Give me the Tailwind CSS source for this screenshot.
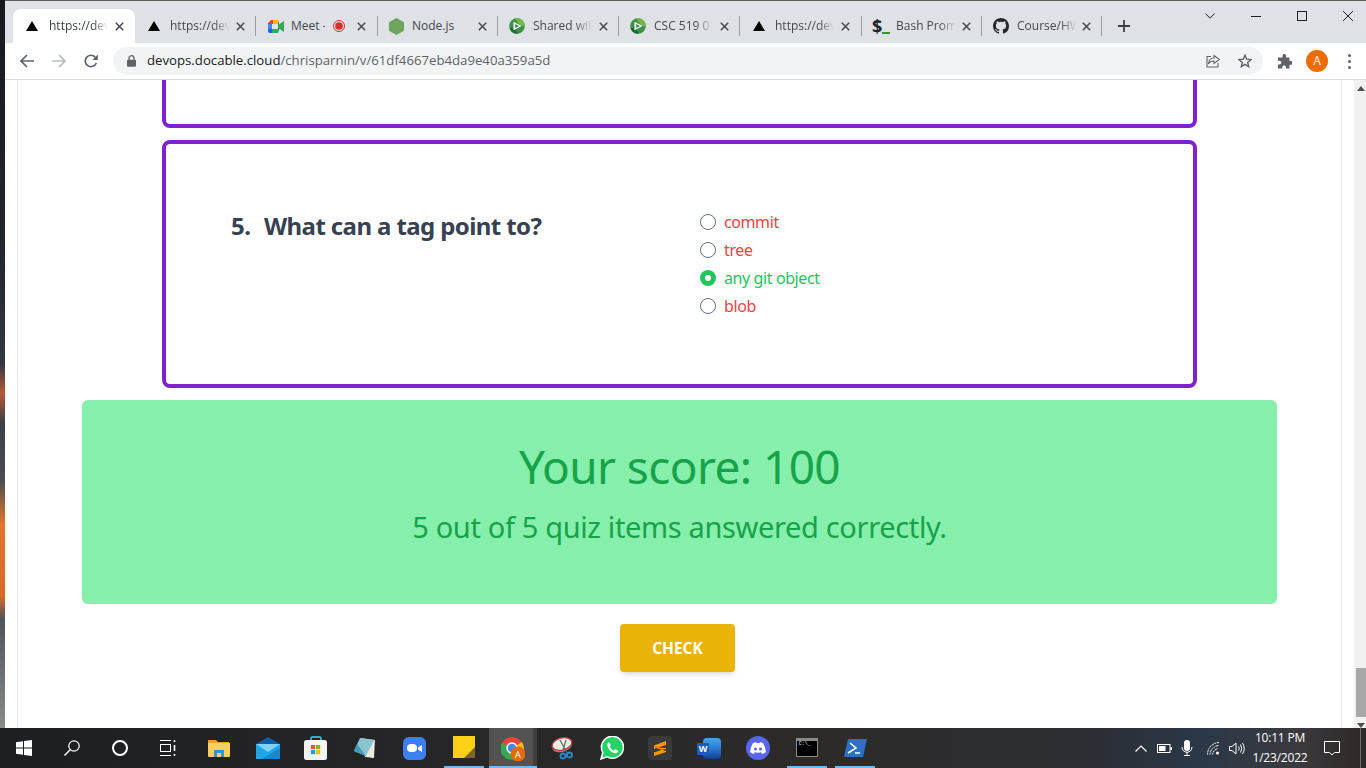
<!DOCTYPE html>
<html lang="en">
<head>
  <meta charset="UTF-8" />
  <title>Docable quiz</title>
  <script src="https://cdn.jsdelivr.net/npm/@tailwindcss/browser@4"></script>
</head>
<body class="w-[1366px] h-[768px] overflow-hidden flex flex-col bg-white font-['Noto_Sans',sans-serif]">

  <div class="flex h-[728px]">
    <!-- wallpaper strip -->
    <div class="w-[5px] bg-[linear-gradient(to_bottom,#16181d_0%,#23272d_35%,#34383e_50%,#b5583a_54%,#3c3f44_58%,#4a4c50_66%,#e2762d_72%,#d56a2a_82%,#50545a_85%,#8a8c8a_100%)]"></div>

    <!-- browser window -->
    <div class="w-[1361px] flex flex-col">
      <!-- tab strip -->
      <div class="h-[43px] bg-[#dee1e6] border-t border-[#5f6060] flex items-start pl-[8px] font-['Open_Sans',sans-serif] text-[12px] text-[#45484d]">
        <div class="w-[122px] h-[34px] mt-[8px] rounded-t-lg bg-white flex items-center pl-[13px] text-[#3c4043]">
          <svg class="w-[12px] h-[10px]" viewBox="0 0 12 10"><path d="M6 0L12 10H0Z" fill="#000"/></svg>
          <span class="ml-[11px] w-[59px] overflow-hidden whitespace-nowrap [mask-image:linear-gradient(to_right,black_75%,transparent)]">https://dev</span>
          <svg class="ml-[7px] w-[9px] h-[9px]" viewBox="0 0 9 9"><path d="M.8.8l7.4 7.4M8.200.8L.8 8.200" stroke="#45484d" stroke-width="1.500"/></svg>
        </div>
        <div class="w-[121px] h-[34px] mt-[8px] flex items-center pl-[13px] relative">
          <svg class="w-[12px] h-[10px]" viewBox="0 0 12 10"><path d="M6 0L12 10H0Z" fill="#000"/></svg>
          <span class="ml-[10px] w-[59px] overflow-hidden whitespace-nowrap [mask-image:linear-gradient(to_right,black_75%,transparent)]">https://dev</span>
          <svg class="ml-[7px] w-[9px] h-[9px]" viewBox="0 0 9 9"><path d="M.8.8l7.4 7.4M8.200.8L.8 8.200" stroke="#45484d" stroke-width="1.500"/></svg>
          <div class="absolute right-0 top-[7px] w-px h-[20px] bg-[#9a9da1]"></div>
        </div>
        <div class="w-[122px] h-[34px] mt-[8px] flex items-center pl-[12px] relative">
          <svg class="w-[16px] h-[13px]" viewBox="0 0 16 13"><path d="M0 3L3 0H5V4H0Z" fill="#ea4335"/><path d="M5 0H10V4H5Z" fill="#fbbc04"/><path d="M0 4H4V9H0Z" fill="#4285f4"/><path d="M0 9H4V13H2Q0 13 0 11Z" fill="#1967d2"/><path d="M4 9H10V13H4Z" fill="#34a853"/><path d="M10 0V13L11 9V4Z" fill="#188038"/><path d="M10 5L16 1V12L10 8Z" fill="#34a853"/></svg>
          <span class="ml-[7px] w-[34px] overflow-hidden whitespace-nowrap">Meet -</span>
          <svg class="ml-[8px] w-[12px] h-[12px]" viewBox="0 0 12 12"><circle cx="6" cy="6" r="5.500" fill="none" stroke="#d93025"/><circle cx="6" cy="6" r="3.800" fill="#d93025"/></svg>
          <svg class="ml-[12px] w-[9px] h-[9px]" viewBox="0 0 9 9"><path d="M.8.8l7.4 7.4M8.200.8L.8 8.200" stroke="#45484d" stroke-width="1.500"/></svg>
          <div class="absolute right-0 top-[7px] w-px h-[20px] bg-[#9a9da1]"></div>
        </div>
        <div class="w-[120px] h-[34px] mt-[8px] flex items-center pl-[11px] relative">
          <svg class="w-[15px] h-[17px]" viewBox="0 0 15 17"><path d="M7.500 0L15 4.250V12.750L7.500 17L0 12.750V4.250Z" fill="#6da55f"/></svg>
          <span class="ml-[8px] w-[60px] overflow-hidden whitespace-nowrap">Node.js</span>
          <svg class="ml-[6px] w-[9px] h-[9px]" viewBox="0 0 9 9"><path d="M.8.8l7.4 7.4M8.200.8L.8 8.200" stroke="#45484d" stroke-width="1.500"/></svg>
          <div class="absolute right-0 top-[7px] w-px h-[20px] bg-[#9a9da1]"></div>
        </div>
        <div class="w-[121px] h-[34px] mt-[8px] flex items-center pl-[11px] relative">
          <svg class="w-[16px] h-[16px]" viewBox="0 0 16 16"><circle cx="8" cy="8" r="7.800" fill="#3f8f4b"/><path d="M6 .4A7.800 7.800 0 0 1 15.800 8.500L11 7.500Z" fill="#74b84a"/><path d="M.5 10L5 9.500L9 15.700A7.800 7.800 0 0 1 .5 10Z" fill="#1f6a35"/><path d="M4.500 3.800L12.500 8L4.500 12.200Z" fill="#fff"/><path d="M6.200 6L10 8L6.200 10Z" fill="#2f8a45"/></svg>
          <span class="ml-[8px] w-[59px] overflow-hidden whitespace-nowrap [mask-image:linear-gradient(to_right,black_70%,transparent)]">Shared with</span>
          <svg class="ml-[7px] w-[9px] h-[9px]" viewBox="0 0 9 9"><path d="M.8.8l7.4 7.4M8.200.8L.8 8.200" stroke="#45484d" stroke-width="1.500"/></svg>
          <div class="absolute right-0 top-[7px] w-px h-[20px] bg-[#9a9da1]"></div>
        </div>
        <div class="w-[121px] h-[34px] mt-[8px] flex items-center pl-[11px] relative">
          <svg class="w-[16px] h-[16px]" viewBox="0 0 16 16"><circle cx="8" cy="8" r="7.800" fill="#3f8f4b"/><path d="M6 .4A7.800 7.800 0 0 1 15.800 8.500L11 7.500Z" fill="#74b84a"/><path d="M.5 10L5 9.500L9 15.700A7.800 7.800 0 0 1 .5 10Z" fill="#1f6a35"/><path d="M4.500 3.800L12.500 8L4.500 12.200Z" fill="#fff"/><path d="M6.200 6L10 8L6.200 10Z" fill="#2f8a45"/></svg>
          <span class="ml-[8px] w-[59px] overflow-hidden whitespace-nowrap [mask-image:linear-gradient(to_right,black_70%,transparent)]">CSC 519 01</span>
          <svg class="ml-[7px] w-[9px] h-[9px]" viewBox="0 0 9 9"><path d="M.8.8l7.4 7.4M8.200.8L.8 8.200" stroke="#45484d" stroke-width="1.500"/></svg>
          <div class="absolute right-0 top-[7px] w-px h-[20px] bg-[#9a9da1]"></div>
        </div>
        <div class="w-[122px] h-[34px] mt-[8px] flex items-center pl-[13px] relative">
          <svg class="w-[12px] h-[10px]" viewBox="0 0 12 10"><path d="M6 0L12 10H0Z" fill="#000"/></svg>
          <span class="ml-[10px] w-[59px] overflow-hidden whitespace-nowrap [mask-image:linear-gradient(to_right,black_75%,transparent)]">https://dev</span>
          <svg class="ml-[7px] w-[9px] h-[9px]" viewBox="0 0 9 9"><path d="M.8.8l7.4 7.4M8.200.8L.8 8.200" stroke="#45484d" stroke-width="1.500"/></svg>
          <div class="absolute right-0 top-[7px] w-px h-[20px] bg-[#9a9da1]"></div>
        </div>
        <div class="w-[120px] h-[34px] mt-[8px] flex items-center pl-[10px] relative">
          <span class="w-[10px] text-[18px] font-bold leading-none text-[#202124]">$</span><span class="w-[8px] h-[2px] bg-[#3a9a1e] mt-[13px]"></span>
          <span class="ml-[6px] w-[59px] overflow-hidden whitespace-nowrap [mask-image:linear-gradient(to_right,black_75%,transparent)]">Bash Prom</span>
          <svg class="ml-[7px] w-[9px] h-[9px]" viewBox="0 0 9 9"><path d="M.8.8l7.4 7.4M8.200.8L.8 8.200" stroke="#45484d" stroke-width="1.500"/></svg>
          <div class="absolute right-0 top-[7px] w-px h-[20px] bg-[#9a9da1]"></div>
        </div>
        <div class="w-[120px] h-[34px] mt-[8px] flex items-center pl-[11px] relative">
          <svg class="w-[16px] h-[16px]" viewBox="0 0 16 16"><path fill="#24292f" d="M8 0C3.580 0 0 3.580 0 8c0 3.540 2.290 6.530 5.470 7.590.4.070.55-.17.55-.38 0-.19-.01-.82-.01-1.490-2.010.37-2.530-.49-2.690-.94-.09-.23-.48-.94-.82-1.130-.28-.15-.68-.52-.01-.53.63-.01 1.080.58 1.230.82.72 1.210 1.870.87 2.330.66.07-.52.28-.87.51-1.070-1.780-.2-3.640-.89-3.640-3.950 0-.87.31-1.590.82-2.150-.08-.2-.36-1.020.08-2.120 0 0 .67-.21 2.200.82.64-.18 1.320-.27 2-.27s1.360.09 2 .27c1.530-1.040 2.200-.82 2.200-.82.44 1.100.16 1.920.08 2.120.51.56.82 1.270.82 2.150 0 3.070-1.870 3.750-3.650 3.950.29.25.54.73.54 1.480 0 1.070-.01 1.930-.01 2.200 0 .21.15.46.55.38A8.010 8.010 0 0 0 16 8c0-4.420-3.580-8-8-8z"/></svg>
          <span class="ml-[8px] w-[59px] overflow-hidden whitespace-nowrap [mask-image:linear-gradient(to_right,black_75%,transparent)]">Course/HW</span>
          <svg class="ml-[6px] w-[9px] h-[9px]" viewBox="0 0 9 9"><path d="M.8.8l7.4 7.4M8.200.8L.8 8.200" stroke="#45484d" stroke-width="1.500"/></svg>
          <div class="absolute right-0 top-[7px] w-px h-[20px] bg-[#9a9da1]"></div>
        </div>
        <svg class="ml-[16px] mt-[19px] w-[12px] h-[12px]" viewBox="0 0 12 12"><path d="M6 0V12M0 6H12" stroke="#3c4043" stroke-width="1.800"/></svg>
        <!-- window controls -->
        <div class="ml-auto -mr-[5px] flex h-[30px] items-center">
          <div class="w-[46px] flex justify-center"><svg class="w-[10px] h-[6px]" viewBox="0 0 10 6"><path d="M.5.5L5 5.200L9.500.5" fill="none" stroke="#202124"/></svg></div>
          <div class="w-[46px] flex justify-center"><div class="w-[10px] h-px bg-[#202124]"></div></div>
          <div class="w-[46px] flex justify-center"><div class="w-[10px] h-[10px] border border-[#202124]"></div></div>
          <div class="w-[46px] flex justify-center"><svg class="w-[10px] h-[10px]" viewBox="0 0 10 10"><path d="M0 0L10 10M10 0L0 10" stroke="#202124"/></svg></div>
        </div>
      </div>

      <!-- toolbar -->
      <div class="h-[37px] bg-white border-b border-[#dadce0] flex items-center">
        <div class="w-[108px] flex items-center pl-[15px] gap-[18px]">
          <svg class="w-[14px] h-[14px]" viewBox="0 0 14 14"><path d="M14 7H1.500M7 1L1 7L7 13" fill="none" stroke="#5f6368" stroke-width="1.700"/></svg>
          <svg class="w-[14px] h-[14px]" viewBox="0 0 14 14"><path d="M0 7H12.500M7 1L13 7L7 13" fill="none" stroke="#b8babd" stroke-width="1.700"/></svg>
          <svg class="w-[14px] h-[14px]" viewBox="0 0 14 14"><path d="M12.300 9A5.700 5.700 0 1 1 11.200 3.100" fill="none" stroke="#5f6368" stroke-width="1.700"/><path d="M13.800 0.500V6H8.300Z" fill="#5f6368"/></svg>
        </div>
        <div class="w-[1150px] h-[28px] rounded-full bg-[#f1f3f4] flex items-center pl-[14px] pr-[11px]">
          <svg class="w-[9px] h-[12px]" viewBox="0 0 9 12"><path d="M2 5V3.200a2.500 2.500 0 0 1 5 0V5" fill="none" stroke="#5f6368" stroke-width="1.300"/><rect y="4.800" width="9" height="7" rx="1" fill="#5f6368"/></svg>
          <div class="ml-[11px] text-[13.200px] font-['Open_Sans',sans-serif] text-[#5f6368] whitespace-nowrap"><span class="text-[#202124]">devops.docable.cloud</span>/chrisparnin/v/61df4667eb4da9e40a359a5d</div>
          <div class="ml-auto flex items-center gap-[18px]">
            <svg class="w-[14px] h-[14px]" viewBox="0 0 14 14"><path d="M8 1.500L13.500 5.500L8 9.500V7C5 7 3.500 8 2.500 10C2.500 6.500 4.500 4 8 4Z" fill="none" stroke="#5f6368" stroke-width="1.100"/><path d="M5 2.500H1V13H12V9" fill="none" stroke="#5f6368" stroke-width="1.100"/></svg>
            <svg class="w-[14px] h-[14px]" viewBox="0 0 14 14"><path d="M7 1.200L8.700 5.200L13 5.600L9.700 8.400L10.700 12.700L7 10.400L3.300 12.700L4.300 8.400L1 5.600L5.300 5.200Z" fill="none" stroke="#5f6368" stroke-width="1.400"/></svg>
          </div>
        </div>
        <svg class="ml-[14px] w-[15px] h-[15px]" viewBox="0 0 15 15"><path d="M5.500 1.500a1.800 1.800 0 0 1 3.500 0V3.500H12.500V7H14a1.900 1.900 0 0 1 0 3.800H12.500V14.500H9V13a1.900 1.900 0 0 0-3.700 0v1.500H1V10.500H2.500a1.900 1.900 0 0 0 0-3.800H1V3.500H5.500Z" fill="#5f6368"/></svg>
        <div class="ml-[14px] w-[22px] h-[22px] rounded-full bg-[#ef6c00] text-white text-[12px] flex items-center justify-center font-['Open_Sans',sans-serif]">A</div>
        <div class="ml-[20px] flex flex-col gap-[3px]">
          <div class="w-[3px] h-[3px] rounded-full bg-[#5f6368]"></div>
          <div class="w-[3px] h-[3px] rounded-full bg-[#5f6368]"></div>
          <div class="w-[3px] h-[3px] rounded-full bg-[#5f6368]"></div>
        </div>
      </div>

      <!-- page viewport -->
      <div class="h-[648px] flex">
        <div class="w-[12px]"></div>
        <div class="w-[1325px] border-x border-[#e5e7eb] flex flex-col items-center">
          <div class="w-[1035px] h-[48px] border-4 border-t-0 border-[#7e22ce] rounded-b-lg"></div>
          <div class="mt-[12px] w-[1035px] h-[248px] border-4 border-[#7e22ce] rounded-lg flex pt-[64px] pl-[65px]">
            <div class="w-[469px] mt-[2px] flex text-[24px] leading-[32px] font-bold text-[#374151] tracking-[-0.6px]">
              <span class="w-[33px]">5.</span><span>What can a tag point to?</span>
            </div>
            <div class="flex flex-col text-[16px] leading-[28px] tracking-[-0.4px]">
              <label class="flex items-center gap-[8px] text-[#ef4444]"><span class="w-[16px] h-[16px] rounded-full border border-[#6b7280] bg-white"></span>commit</label>
              <label class="flex items-center gap-[8px] text-[#ef4444]"><span class="w-[16px] h-[16px] rounded-full border border-[#6b7280] bg-white"></span>tree</label>
              <label class="flex items-center gap-[8px] text-[#22c55e]"><span class="w-[16px] h-[16px] rounded-full bg-[#22c55e] flex items-center justify-center"><span class="w-[6px] h-[6px] rounded-full bg-white"></span></span>any git object</label>
              <label class="flex items-center gap-[8px] text-[#ef4444]"><span class="w-[16px] h-[16px] rounded-full border border-[#6b7280] bg-white"></span>blob</label>
            </div>
          </div>
          <div class="mt-[12px] w-[1195px] h-[204px] bg-[#86efac] rounded-md flex flex-col items-center pt-[36px] text-[#16a34a]">
            <div class="text-[46px] leading-[60px] tracking-[-0.6px]">Your score: 100</div>
            <div class="mt-[11px] text-[29px] leading-[40px] tracking-[-0.35px]">5 out of 5 quiz items answered correctly.</div>
          </div>
          <button class="mt-[20px] mr-[4px] pt-[2px] w-[115px] h-[48px] rounded bg-[#eab308] text-white font-bold text-[15.500px] shadow-md">CHECK</button>
        </div>
        <div class="w-[12px]"></div>
        <!-- scrollbar -->
        <div class="w-[12px] bg-[#f1f1f1] flex flex-col items-end">
          <svg class="mt-[6px] mr-[1px] w-[8px] h-[5px]" viewBox="0 0 8 5"><path d="M4 0L8 5H0Z" fill="#505050"/></svg>
          <div class="mt-[577px] w-[10px] h-[49px] bg-[#a8a8a8]"></div>
          <svg class="mt-[6px] mr-[1px] w-[8px] h-[5px]" viewBox="0 0 8 5"><path d="M4 5L8 0H0Z" fill="#505050"/></svg>
        </div>
      </div>
    </div>
  </div>

  <!-- taskbar -->
  <div class="h-[40px] flex bg-[linear-gradient(to_right,#1d1e21_0%,#262628_30%,#2d2b2a_60%,#2b2e33_80%,#2b3848_88%,#3a3a3e_95%,#2f2825_100%)] text-white">
    <div class="w-[48px] flex items-center justify-center">
      <svg class="w-[16px] h-[16px]" viewBox="0 0 16 16"><path d="M0 2.300L7 1.300V7.500H0ZM8 1.100L16 0V7.500H8ZM0 8.500H7V14.700L0 13.700ZM8 8.500H16V16L8 14.900Z" fill="#fff"/></svg>
    </div>
    <div class="w-[48px] flex items-center justify-center">
      <svg class="w-[16px] h-[16px]" viewBox="0 0 16 16"><circle cx="10" cy="6" r="5.200" fill="none" stroke="#fff" stroke-width="1.200"/><path d="M6.200 9.800L.5 15.500" stroke="#fff" stroke-width="1.400"/></svg>
    </div>
    <div class="w-[48px] flex items-center justify-center">
      <div class="w-[16px] h-[16px] rounded-full border-2 border-white"></div>
    </div>
    <div class="w-[48px] flex items-center justify-center">
      <svg class="w-[16px] h-[16px]" viewBox="0 0 16 16" fill="none" stroke="#fff"><path d="M0 .5H11M0 15.500H11"/><rect x=".5" y="4.500" width="10" height="7"/><path d="M14.500 0V2M14.500 5V11M14.500 14V16" stroke-width="1.600"/></svg>
    </div>
    <div class="w-[2.500px]"></div>
    <div class="w-[48.750px] flex items-center justify-center">
      <svg class="w-[22px] h-[18px]" viewBox="0 0 22 18"><path d="M0 1H8L10 3H21V5H0Z" fill="#e0a526"/><path d="M0 4H22V17Q22 18 21 18H1Q0 18 0 17Z" fill="#f9cf60"/><path d="M6 18V11H16V18H13V14H9V18Z" fill="#3b8fd4"/></svg>
    </div>
    <div class="w-[48.750px] flex items-center justify-center">
      <svg class="w-[24px] h-[22px]" viewBox="0 0 24 22"><path d="M12 0L24 7H0Z" fill="#0a5fa8"/><rect y="7" width="24" height="15" fill="#1ea7e8"/><path d="M0 7L12 15L24 7Z" fill="#7fd3f7"/><path d="M24 22H6L24 11Z" fill="#1488d0"/></svg>
    </div>
    <div class="w-[48.750px] flex items-center justify-center">
      <svg class="w-[24px] h-[24px]" viewBox="0 0 24 24"><path d="M7 5V2.500Q7 1 8.500 1H15.500Q17 1 17 2.500V5" fill="none" stroke="#2bb0e8" stroke-width="1.800"/><rect y="4" width="23" height="20" rx="2.500" fill="#f5f5f5"/><rect x="7" y="9" width="4.200" height="4.200" fill="#f25022"/><rect x="12" y="9" width="4.200" height="4.200" fill="#7fba00"/><rect x="7" y="14" width="4.200" height="4.200" fill="#00a4ef"/><rect x="12" y="14" width="4.200" height="4.200" fill="#ffb900"/></svg>
    </div>
    <div class="w-[48.750px] flex items-center justify-center">
      <svg class="w-[24px] h-[24px]" viewBox="0 0 24 24"><path d="M7 2L22 4L21 22L12 21Z" fill="#d8dfe0"/><path d="M7 2L21 4L13 20L1 15Z" fill="#8cc3d0"/><path d="M4 8L13 20L1 15Z" fill="#3d9fb5"/><path d="M13 20L21 22L21 6Z" fill="#eee9d8"/></svg>
    </div>
    <div class="w-px"></div>
    <div class="w-[48.750px] flex items-center justify-center">
      <div class="w-[23px] h-[23px] rounded-md bg-[#3d7ff0] flex items-center justify-center gap-[1px]"><span class="w-[10px] h-[8px] rounded-sm bg-white"></span><svg class="w-[4px] h-[7px]" viewBox="0 0 4 7"><path d="M0 2.500L4 0V7L0 4.500Z" fill="#fff"/></svg></div>
    </div>
    <div class="w-[48.750px] flex flex-col items-center">
      <div class="mt-[8px] w-[22px] h-[22px] bg-[#fcd116] flex items-end justify-end"><svg class="w-[11px] h-[11px]" viewBox="0 0 11 11"><path d="M11 0V11H0Z" fill="#7a6428"/></svg></div>
      <div class="mt-auto w-[40px] h-[2px] bg-[#76b9ed]"></div>
    </div>
    <div class="w-px"></div>
    <div class="w-[48px] flex relative">
      <div class="w-[44px] bg-white/20 flex flex-col items-center">
        <svg class="mt-[9px] ml-[3px] w-[24px] h-[24px]" viewBox="0 0 24 24"><circle cx="11" cy="11" r="11" fill="#ea4335"/><path d="M11 11L21 5A11 11 0 0 1 14 22Z" fill="#fbbc04"/><path d="M11 11L14 22A11 11 0 0 1 1 6Z" fill="#34a853"/><circle cx="11" cy="11" r="5" fill="#4285f4" stroke="#fff" stroke-width="1.500"/><circle cx="17" cy="17" r="7.500" fill="#e8690c"/><text x="17" y="20.500" font-size="9" fill="#fff" text-anchor="middle">A</text></svg>
      </div>
      <div class="w-[4px] bg-white/10"></div>
      <div class="absolute bottom-0 inset-x-0 h-[2px] bg-[#76b9ed]"></div>
    </div>
    <div class="w-[1.500px]"></div>
    <div class="w-[48.750px] flex items-center justify-center">
      <svg class="w-[24px] h-[24px]" viewBox="0 0 24 24"><ellipse cx="11" cy="10" rx="10" ry="6" transform="rotate(-15 11 10)" fill="#8a8a8a"/><ellipse cx="11" cy="8" rx="10" ry="6" transform="rotate(-15 11 8)" fill="#f0ece8" stroke="#c8393c" stroke-width="1.300"/><path d="M9 4L16 17M15 4L12 14" stroke="#666" stroke-width="1.200"/><circle cx="18.500" cy="19" r="2.500" fill="none" stroke="#2a85c9" stroke-width="2"/><circle cx="12" cy="20" r="2.500" fill="none" stroke="#2a85c9" stroke-width="2"/></svg>
    </div>
    <div class="w-[48.750px] flex items-center justify-center">
      <svg class="w-[24px] h-[24px]" viewBox="0 0 24 24"><path d="M1 23L2.800 16.500A11 11 0 1 1 7.200 20.900Z" fill="#25d366" stroke="#fff" stroke-width="1.500"/><path d="M8.200 6.500C7 7.500 6.800 9.500 8.500 12.500C10.300 15.500 13 17.300 15.500 17.300C17 17.300 18 16 18 15C18 14.500 15.500 13.200 15 13.300C14.500 13.500 14.200 14.500 13.700 14.500C12.500 14.200 10.200 12 9.800 10.800C9.800 10.300 10.700 9.800 10.700 9.300C10.700 8.800 9.700 6.500 9.300 6.400Z" fill="#fff"/></svg>
    </div>
    <div class="w-[48.750px] flex items-center justify-center">
      <div class="w-[24px] h-[24px] rounded-sm bg-[#3a3a3a] flex items-center justify-center">
        <svg class="w-[12px] h-[15px]" viewBox="0 0 12 15"><path d="M12 0V4L0 8V4.500ZM0 6.500L12 10V7ZM12 7.500V11L0 15V11.500Z" fill="#ff9800"/></svg>
      </div>
    </div>
    <div class="w-[48.750px] flex items-center justify-center">
      <div class="relative w-[24px] h-[21px]">
        <div class="absolute right-0 top-0 w-[18px] h-[21px] bg-[linear-gradient(to_bottom,#41a5ee_0%,#2b7cd3_50%,#103f91_100%)] rounded-sm"></div>
        <div class="absolute left-0 top-[5px] w-[12px] h-[12px] bg-[#185abd] rounded-[1px] text-[9px] leading-[12px] font-bold text-center">W</div>
      </div>
    </div>
    <div class="w-[48.750px] flex items-center justify-center">
      <div class="w-[24px] h-[24px] rounded-full bg-[#5865f2] flex items-center justify-center">
        <svg class="w-[16px] h-[12px]" viewBox="0 0 16 12"><path d="M3 1Q5 0 6 .2L6.500 1H9.500L10 .2Q11 0 13 1Q15.500 5 16 10Q14.500 11.500 12 12L11 10.300L12 9.800Q8 11.500 4 9.800L5 10.300L4 12Q1.500 11.500 0 10Q.5 5 3 1Z" fill="#fff"/><circle cx="5.500" cy="7" r="1.500" fill="#5865f2"/><circle cx="10.500" cy="7" r="1.500" fill="#5865f2"/></svg>
      </div>
    </div>
    <div class="w-[48.750px] flex flex-col items-center relative">
      <div class="mt-[10px] w-[22px] h-[19px] bg-black border border-[#8a8a8a] border-t-[3px] text-[5px] leading-[7px] font-['Liberation_Mono',monospace] pl-[2px]">C:\_</div>
      <div class="absolute bottom-0 w-[40px] h-[2px] bg-[#76b9ed]"></div>
    </div>
    <div class="w-[48.750px] flex flex-col items-center relative">
      <svg class="mt-[11px] w-[23px] h-[18px]" viewBox="0 0 23 18"><path d="M4 0H23L19 18H0Z" fill="#2f6fc4"/><path d="M6 4L12 9L4 14M11 14H16" fill="none" stroke="#fff" stroke-width="1.600"/></svg>
      <div class="absolute bottom-0 w-[40px] h-[2px] bg-[#76b9ed]"></div>
    </div>
    <!-- tray -->
    <div class="ml-auto flex items-center pr-[5px]">
      <svg class="w-[12px] h-[7px]" viewBox="0 0 12 7"><path d="M.5 6.500L6 1L11.500 6.500" fill="none" stroke="#fff" stroke-width="1.200"/></svg>
      <svg class="ml-[10px] w-[15px] h-[9px]" viewBox="0 0 15 9"><rect x=".5" y=".5" width="12.500" height="8" fill="none" stroke="#fff"/><rect x="2" y="2" width="6.500" height="5" fill="#fff"/><rect x="13.500" y="3" width="1.500" height="3" fill="#fff"/></svg>
      <svg class="ml-[9px] w-[12px] h-[16px]" viewBox="0 0 12 16"><rect x="3" y="0" width="6" height="11" rx="3" fill="#fff"/><path d="M1 7C1 14 11 14 11 7M6 12V15.500M3 15.500H9" fill="none" stroke="#fff"/></svg>
      <svg class="ml-[14px] w-[13px] h-[13px]" viewBox="0 0 13 13" fill="none" stroke="#fff"><path d="M.5 12.500A12 12 0 0 1 12 .5M3 12.500A9.500 9.500 0 0 1 12 3.500M5.500 12.500A7 7 0 0 1 11 6.500" stroke-dasharray="2 .7"/><circle cx="10.500" cy="11" r="1.500" fill="#fff" stroke="none"/></svg>
      <svg class="ml-[9px] w-[16px] h-[13px]" viewBox="0 0 16 13" fill="none" stroke="#fff"><path d="M.5 4.500H3L7 1V12L3 8.500H.5Z"/><path d="M9.500 4.500Q11 6.500 9.500 8.500M11.500 2.500Q14 6.500 11.500 10.500M13.500 1Q17 6.500 13.500 12"/></svg>
      <div class="w-[70px] text-center text-[12px] leading-[20px] font-['Open_Sans',sans-serif] tracking-[-0.2px]">
        <div>10:11 PM</div>
        <div>1/23/2022</div>
      </div>
      <svg class="ml-[9px] w-[16px] h-[15px]" viewBox="0 0 16 15"><path d="M.5 .5H15.500V11.500H10.500L8 14L5.500 11.500H.5Z" fill="none" stroke="#fff"/></svg>
      <div class="ml-[20px] w-px h-[40px] bg-[#6a6a6a]"></div>
    </div>
  </div>
</body>
</html>
